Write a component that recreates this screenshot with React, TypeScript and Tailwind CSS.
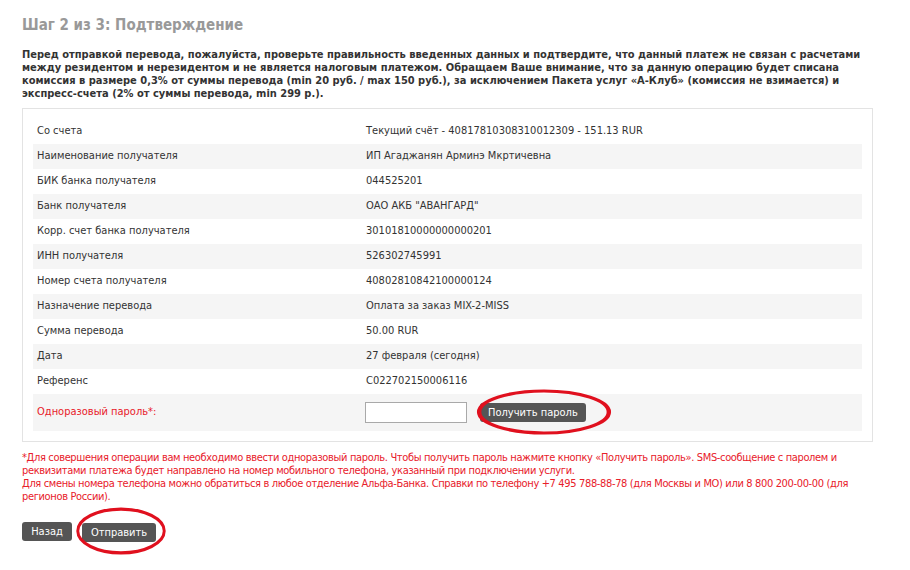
import React from "react";

const rows: [string, string][] = [
  ["Со счета", "Текущий счёт - 40817810308310012309 - 151.13 RUR"],
  ["Наименование получателя", "ИП Агаджанян Арминэ Мкртичевна"],
  ["БИК банка получателя", "044525201"],
  ["Банк получателя", "ОАО АКБ \"АВАНГАРД\""],
  ["Корр. счет банка получателя", "30101810000000000201"],
  ["ИНН получателя", "526302745991"],
  ["Номер счета получателя", "40802810842100000124"],
  ["Назначение перевода", "Оплата за заказ MIX-2-MISS"],
  ["Сумма перевода", "50.00 RUR"],
  ["Дата", "27 февраля (сегодня)"],
  ["Референс", "C022702150006116"],
];

// hand-drawn red marker circle
function Ring({ className }: { className: string }) {
  return (
    <svg className={className} viewBox="0 0 100 50" preserveAspectRatio="none" fill="none">
      <ellipse cx="50" cy="25" rx="47" ry="21" stroke="#e0101e" strokeWidth="3.2" />
    </svg>
  );
}

export default function App() {
  return (
    <div
      className="w-[910px] h-[570px] bg-white text-[#333] pl-[22px] pt-[15px]"
      style={{ fontFamily: '"DejaVu Sans Condensed", "DejaVu Sans", sans-serif' }}
    >
      <h1 className="text-[15px] font-bold text-[#999] leading-[20px]">Шаг 2 из 3: Подтверждение</h1>

      <p className="w-[851px] mt-[13px] text-[11px] font-bold leading-[13px] text-[#333]">
        Перед отправкой перевода, пожалуйста, проверьте правильность введенных данных и подтвердите, что данный
        платеж не связан с расчетами между резидентом и нерезидентом и не является налоговым платежом. Обращаем
        Ваше внимание, что за данную операцию будет списана комиссия в размере 0,3% от суммы перевода (min 20 руб. /
        max 150 руб.), за исключением Пакета услуг «А-Клуб» (комиссия не взимается) и экспресс-счета (2% от суммы
        перевода, min 299 р.).
      </p>

      <div className="w-[851px] mt-[8px] border border-[#e3e3e3] px-[10px] py-[10px]">
        {rows.map(([label, value], i) => (
          <div
            key={label}
            className={`flex items-center h-[25px] text-[11px] ${i % 2 === 1 ? "bg-[#f5f5f5]" : "bg-white"}`}
          >
            <div className="w-[333px] pl-[4px]">{label}</div>
            <div>{value}</div>
          </div>
        ))}
        <div className="flex items-center h-[37px] text-[11px] bg-[#f5f5f5]">
          <div className="w-[332px] pl-[4px] text-[#e8202a]">Одноразовый пароль*:</div>
          <input className="w-[102px] h-[21px] border border-[#a9a9a9] bg-white" />
          <div className="relative ml-[13px]">
            <button className="h-[19px] px-[8px] rounded-[3px] bg-[#555] text-white text-[11px] leading-[19px]">
              Получить пароль
            </button>
            <Ring className="absolute left-[-5px] top-[-16px] w-[138px] h-[50px] pointer-events-none" />
          </div>
        </div>
      </div>

      <p className="w-[851px] mt-[9px] text-[11px] tracking-[-0.35px] leading-[13px] text-[#e8202a]">
        *Для совершения операции вам необходимо ввести одноразовый пароль. Чтобы получить пароль нажмите кнопку
        «Получить пароль». SMS-сообщение с паролем и реквизитами платежа будет направлено на номер мобильного
        телефона, указанный при подключении услуги.
        <br />
        Для смены номера телефона можно обратиться в любое отделение Альфа-Банка. Справки по телефону +7 495
        788-88-78 (для Москвы и МО) или 8 800 200-00-00 (для регионов России).
      </p>

      <div className="flex items-center gap-[10px] mt-[16px]">
        <button className="h-[19px] w-[50px] rounded-[3px] bg-[#555] text-white text-[11px] leading-[19px]">
          Назад
        </button>
        <div className="relative">
          <button className="h-[19px] w-[74px] rounded-[3px] bg-[#555] text-white text-[11px] leading-[19px]">
            Отправить
          </button>
          <Ring className="absolute left-[-7px] top-[-14px] w-[92px] h-[52px] pointer-events-none" />
        </div>
      </div>
    </div>
  );
}
